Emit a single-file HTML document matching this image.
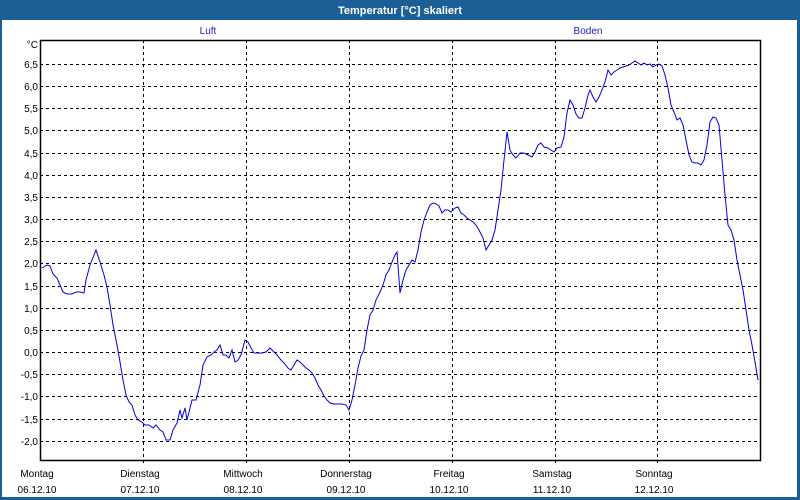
<!DOCTYPE html>
<html><head><meta charset="utf-8"><style>
body{margin:0;width:800px;height:500px;overflow:hidden;background:#fff;font-family:"Liberation Sans",sans-serif;}
</style></head><body>
<svg width="800" height="500" xmlns="http://www.w3.org/2000/svg" style="position:absolute;left:0;top:0">
<rect x="0" y="0" width="800" height="500" fill="#1c5f96"/>
<rect x="2" y="20" width="795" height="477" fill="#fff"/>
<text x="400" y="14" fill="#fff" font-size="11" font-weight="bold" text-anchor="middle" font-family="Liberation Sans">Temperatur [°C] skaliert</text>
<text x="208" y="34" fill="#2020c0" font-size="10" text-anchor="middle" font-family="Liberation Sans">Luft</text>
<text x="588" y="34" fill="#2020c0" font-size="10" text-anchor="middle" font-family="Liberation Sans">Boden</text>
<g stroke="#000" stroke-width="1" stroke-dasharray="3,3" fill="none">
<path d="M40 64.5H760M40 86.5H760M40 108.5H760M40 130.5H760M40 153.5H760M40 175.5H760M40 197.5H760M40 219.5H760M40 241.5H760M40 263.5H760M40 286.5H760M40 308.5H760M40 330.5H760M40 352.5H760M40 374.5H760M40 396.5H760M40 419.5H760M40 441.5H760"/>
<path d="M143.5 40V464M246.5 40V464M349.5 40V464M452.5 40V464M555.5 40V464M657.5 40V464"/>
</g>
<rect x="40.5" y="40.5" width="720" height="420" fill="none" stroke="#000" stroke-width="1.5"/>
<g font-size="10" fill="#000" text-anchor="end" font-family="Liberation Sans">
<text x="38" y="48">°C</text>
<text x="38" y="68">6,5</text><text x="38" y="90">6,0</text><text x="38" y="112">5,5</text><text x="38" y="134">5,0</text><text x="38" y="157">4,5</text><text x="38" y="179">4,0</text><text x="38" y="201">3,5</text><text x="38" y="223">3,0</text><text x="38" y="245">2,5</text><text x="38" y="267">2,0</text><text x="38" y="290">1,5</text><text x="38" y="312">1,0</text><text x="38" y="334">0,5</text><text x="38" y="356">0,0</text><text x="38" y="378">-0,5</text><text x="38" y="400">-1,0</text><text x="38" y="423">-1,5</text><text x="38" y="445">-2,0</text>
</g>
<g font-size="10" fill="#000" text-anchor="middle" font-family="Liberation Sans">
<text x="37" y="477">Montag</text><text x="37" y="493">06.12.10</text>
<text x="140" y="477">Dienstag</text><text x="140" y="493">07.12.10</text>
<text x="243" y="477">Mittwoch</text><text x="243" y="493">08.12.10</text>
<text x="346" y="477">Donnerstag</text><text x="346" y="493">09.12.10</text>
<text x="449" y="477">Freitag</text><text x="449" y="493">10.12.10</text>
<text x="552" y="477">Samstag</text><text x="552" y="493">11.12.10</text>
<text x="654" y="477">Sonntag</text><text x="654" y="493">12.12.10</text>
</g>
<polyline fill="none" stroke="#0000e0" stroke-width="1" points="42,268 47,265 50,266 53,274 57,278 60,285 63,292 67,294 72,294 76,292 80,292 84,293 86,280 90,265 94,255 96,250 100,262 104,275 107,287 110,305 113,325 117,345 120,362 123,380 126,395 129,402 132,405 135,415 138,420 142,422 145,425 149,425 153,428 156,425 160,430 163,432 166,440 170,440 173,430 177,423 180,410 182,418 185,408 187,420 189,412 192,400 196,400 200,385 203,365 207,357 211,355 214,352 217,350 220,345 223,355 226,355 229,358 232,350 235,362 238,360 241,355 245,340 248,342 251,348 254,353 258,353 262,353 266,352 270,348 274,352 277,355 281,360 284,363 288,368 291,370 294,365 297,360 300,362 303,365 306,368 309,370 312,373 315,378 318,385 321,390 324,396 327,400 330,403 334,404 338,404 342,404 346,405 349,410 352,400 355,385 358,368 361,356 364,350 367,330 370,315 373,310 376,300 380,292 383,285 386,275 389,270 392,262 395,255 397,252 400,293 403,280 406,270 409,265 412,260 415,262 418,250 421,232 424,220 427,212 430,205 433,203 436,204 439,206 442,213 445,210 448,210 451,212 455,208 458,207 461,213 464,215 467,218 470,220 473,222 476,225 479,230 483,238 486,250 489,245 492,240 495,230 498,210 501,190 504,160 507,132 510,150 513,155 516,158 520,153 524,153 528,155 532,157 535,152 538,145 541,143 544,147 548,148 551,150 554,152 557,148 561,147 564,137 567,113 570,100 573,105 576,114 579,118 582,118 585,108 588,95 590,90 593,97 596,102 599,97 602,90 605,82 608,70 611,75 614,72 617,70 620,68 623,67 626,66 629,65 632,63 635,61 638,63 641,65 644,63 647,65 650,64 653,67 656,65 659,64 662,66 665,75 668,88 671,105 674,112 677,120 680,118 683,125 686,140 689,155 692,162 695,163 698,163 701,165 704,160 707,145 710,122 713,117 716,118 719,125 722,160 725,195 728,225 731,230 734,240 737,260 740,275 743,290 746,310 749,330 752,345 755,362 758,380"/>
</svg>
</body></html>
